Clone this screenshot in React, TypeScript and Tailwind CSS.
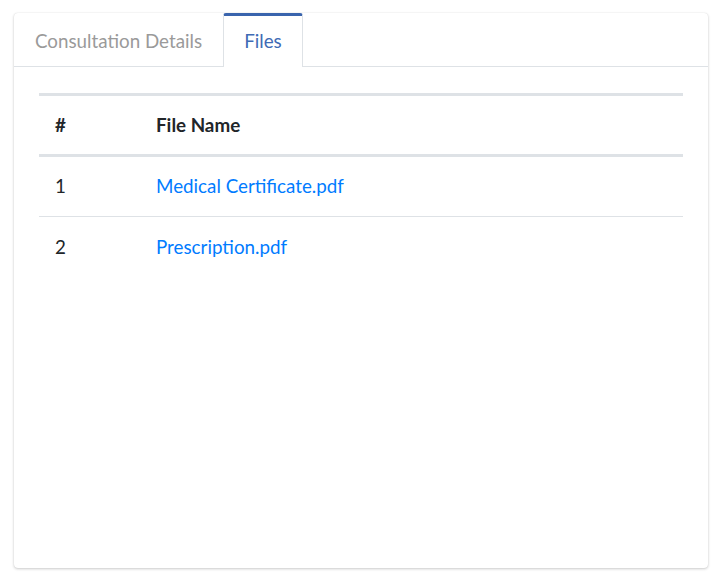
const files = [
  { id: 1, name: "Medical Certificate.pdf" },
  { id: 2, name: "Prescription.pdf" },
];

export default function App() {
  return (
    <div className="min-h-screen bg-white p-[13px_13px_11px_14px] font-['Lato','Noto_Sans',sans-serif] text-[18.8px] text-[#212529]">
      <div className="flex h-[555px] w-[694px] flex-col rounded-[4px] bg-white shadow-[0_0_1px_rgba(0,0,0,0.125),0_1px_3px_rgba(0,0,0,0.2)]">
        <div className="flex h-[54px] border-b border-[#dee2e6]">
          <button className="border-t-[3px] border-transparent px-[21px] text-[#9a9a9a]">
            Consultation Details
          </button>
          <button className="-mb-px rounded-t-[3px] border-x border-t-[3px] border-x-[#dee2e6] border-t-[#3a64ad] bg-white px-[20px] text-[#3f6bb5]">
            Files
          </button>
        </div>
        <div className="px-[25px] pt-[26px]">
          <table className="w-full border-collapse text-left">
            <thead>
              <tr className="h-[61px] border-y-[3px] border-[#dee2e6]">
                <th className="w-[117px] px-[16px] font-bold">#</th>
                <th className="font-bold">File Name</th>
              </tr>
            </thead>
            <tbody>
              {files.map((f) => (
                <tr key={f.id} className="h-[61px] border-b border-[#dee2e6] last:border-b-0">
                  <td className="px-[16px]">{f.id}</td>
                  <td>
                    <a href="#" className="text-[#007bff]">
                      {f.name}
                    </a>
                  </td>
                </tr>
              ))}
            </tbody>
          </table>
        </div>
      </div>
    </div>
  );
}
